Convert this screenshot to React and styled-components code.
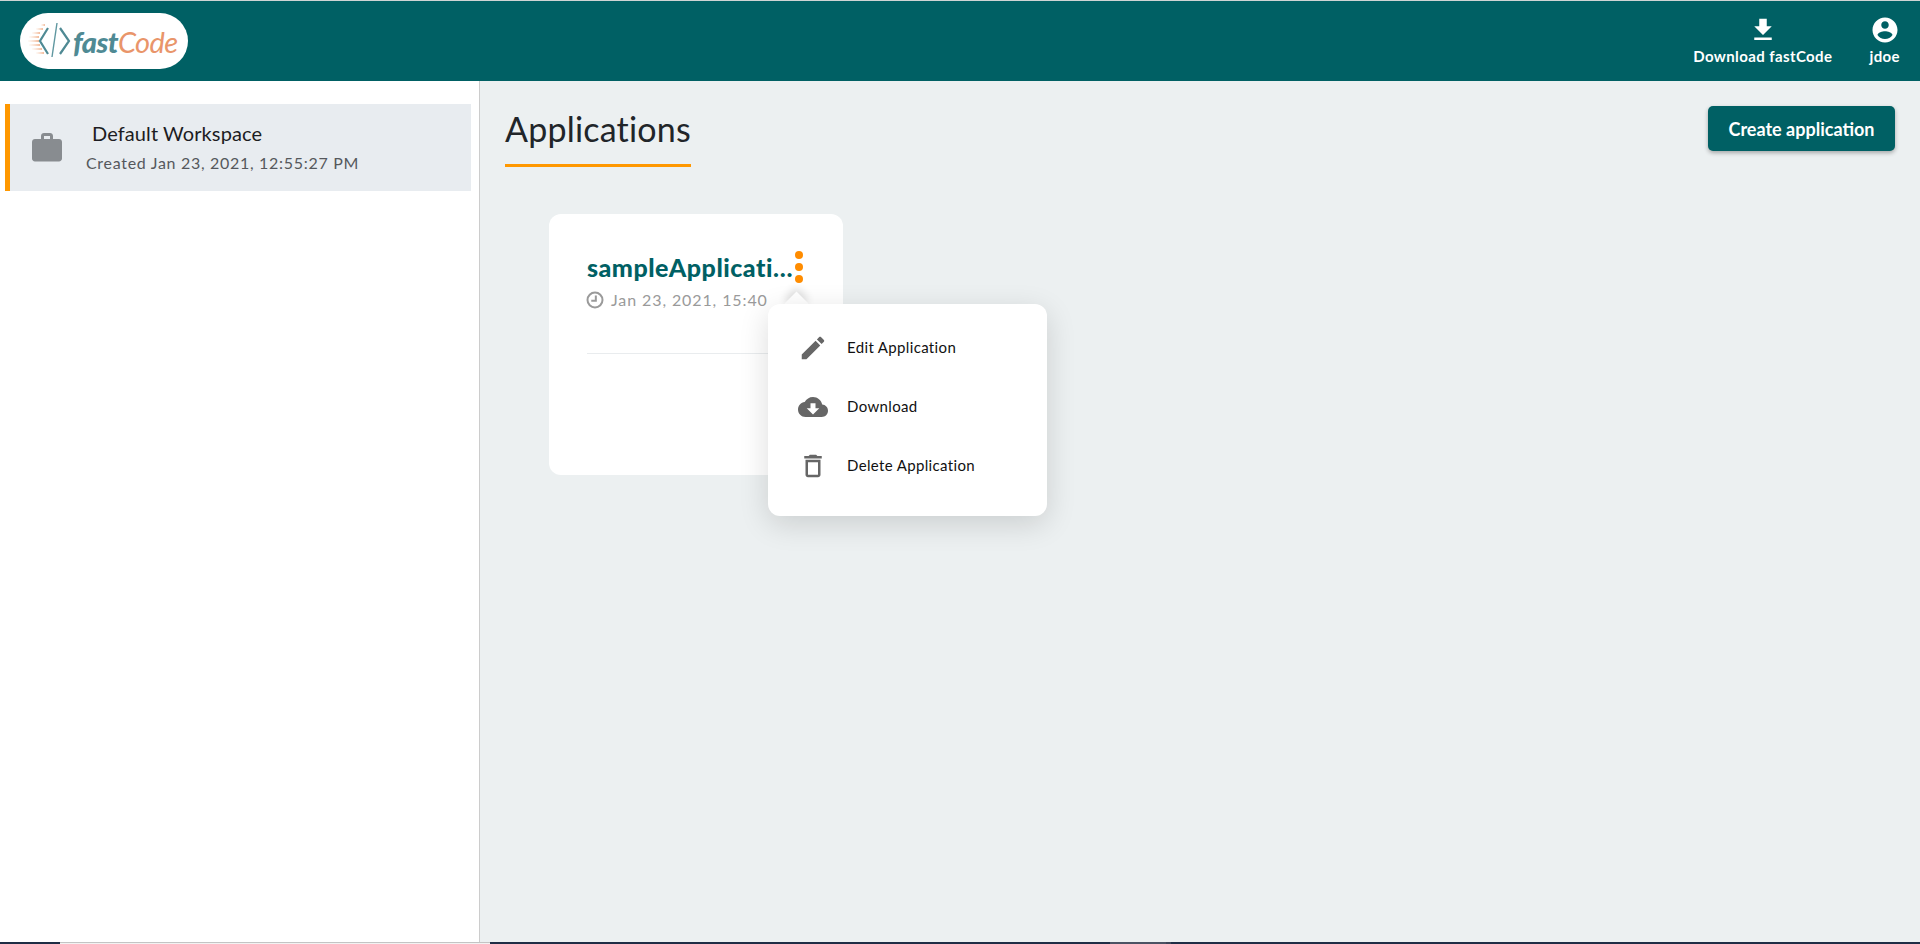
import React from "react";
import styled, { createGlobalStyle } from "styled-components";

const Global = createGlobalStyle`
  html, body, #root { margin: 0; padding: 0; height: 100%; }
  body { font-family: "Lato", "Liberation Sans", sans-serif; overflow: hidden; background: #fff; }
  * { box-sizing: border-box; }
`;

const Page = styled.div`
  height: 944px;
  display: flex;
  flex-direction: column;
`;

const Header = styled.header`
  flex: 0 0 81px;
  background: #006064;
  border-top: 1px solid #cfd4d4;
  display: flex;
  align-items: flex-start;
  justify-content: space-between;
  padding: 12px 20px 0 20px;
`;

const LogoPill = styled.div`
  width: 168px;
  height: 56px;
  border-radius: 28px;
  background: #fff;
  display: flex;
  align-items: center;
  padding-left: 7px;
  overflow: hidden;
`;

const LogoFast = styled.span`
  font-size: 29px;
  font-weight: 900;
  font-style: italic;
  color: #4f8a94;
  margin-left: 1px;
  letter-spacing: -0.5px;
`;

const LogoCode = styled.span`
  font-size: 29px;
  font-weight: 400;
  font-style: italic;
  color: #e9956a;
  letter-spacing: -0.6px;
`;

const HeaderActions = styled.nav`
  display: flex;
  align-items: flex-start;
  gap: 37px;
  padding-top: 2px;
`;

const HeaderAction = styled.div`
  display: flex;
  flex-direction: column;
  align-items: center;
  color: #fff;
  font-size: 15px;
  font-weight: 700;
  line-height: 20px;
  letter-spacing: 0.4px;
  white-space: nowrap;

  span {
    margin-top: 1px;
  }
`;

const Body = styled.div`
  flex: 1;
  display: flex;
  min-height: 0;
`;

const Sidebar = styled.aside`
  flex: 0 0 480px;
  background: #fff;
  border-right: 1px solid #cccccc;
  padding: 23px 8px 0 5px;
`;

const WorkspaceItem = styled.div`
  height: 87px;
  background: #e8ecf0;
  border-left: 5px solid #ff9800;
  display: flex;
  align-items: center;
  padding-left: 19px;
  gap: 20px;
`;

const WorkspaceText = styled.div`
  display: flex;
  flex-direction: column;
  margin-left: 1px;
`;

const WorkspaceName = styled.div`
  font-size: 20px;
  line-height: 26px;
  color: #1c1c22;
  padding-left: 6px;
  margin-bottom: 6px;
  margin-top: -2px;
  letter-spacing: 0.1px;
`;

const WorkspaceDate = styled.div`
  font-size: 16px;
  line-height: 22px;
  color: #55585c;
  letter-spacing: 0.7px;
`;

const Main = styled.main`
  flex: 1;
  background: #ecf0f1;
  padding: 25px 25px 0 25px;
`;

const TitleRow = styled.div`
  display: flex;
  justify-content: space-between;
  align-items: flex-start;
`;

const Title = styled.h1`
  margin: 0;
  font-size: 34px;
  font-weight: 400;
  line-height: 46px;
  height: 61px;
  color: #212529;
  letter-spacing: 0.2px;
  border-bottom: 3px solid #ff9800;
`;

const CreateButton = styled.button`
  width: 187px;
  height: 45px;
  border: none;
  border-radius: 5px;
  background: #006064;
  color: #fff;
  font: 700 18px "Lato", "Liberation Sans", sans-serif;
  box-shadow: 0 2px 4px rgba(0, 0, 0, 0.3);
`;

const Card = styled.section`
  position: relative;
  width: 294px;
  height: 261px;
  margin: 47px 0 0 44px;
  background: #fff;
  border-radius: 12px;
  padding: 35px 38px 0 38px;
`;

const CardHead = styled.div`
  display: flex;
  align-items: center;
`;

const CardTitle = styled.div`
  width: 208px;
  font-size: 25px;
  font-weight: 900;
  line-height: 36px;
  letter-spacing: 0.5px;
  color: #006064;
  white-space: nowrap;
  overflow: hidden;
  text-overflow: ellipsis;
`;

const Dots = styled.div`
  display: flex;
  flex-direction: column;
  gap: 4px;
`;

const Dot = styled.span`
  width: 8px;
  height: 8px;
  border-radius: 50%;
  background: #ff8c00;
`;

const CardDate = styled.div`
  display: flex;
  align-items: center;
  gap: 6px;
  margin-top: 3px;
  margin-left: -2px;
  font-size: 16px;
  line-height: 24px;
  color: #9a9a9a;
  letter-spacing: 0.9px;
`;

const Divider = styled.hr`
  border: none;
  border-top: 1px solid #e9ecee;
  margin: 41px -38px 0 0;
`;

const MenuWrap = styled.div`
  position: absolute;
  left: 219px;
  top: 90px;
  width: 279px;
  height: 212px;
`;

const MenuCaret = styled.span`
  position: absolute;
  left: 20px;
  top: -9px;
  width: 17px;
  height: 17px;
  background: #fff;
  transform: rotate(45deg);
  box-shadow: -3px -3px 9px rgba(0, 0, 0, 0.14);
`;

const MenuPanel = styled.div`
  position: relative;
  height: 100%;
  background: #fff;
  border-radius: 12px;
  box-shadow: 0 8px 30px rgba(0, 0, 0, 0.14);
  padding: 14px 0 0 30px;
`;

const MenuRow = styled.div`
  height: 59px;
  display: flex;
  align-items: center;
  gap: 19px;
`;

const MenuIcon = styled.span`
  width: 30px;
  display: flex;
  justify-content: center;
`;

const MenuLabel = styled.span`
  font-size: 15px;
  color: #111;
  letter-spacing: 0.35px;
  padding-bottom: 2px;
`;

const Taskbar = styled.footer`
  flex: 0 0 2px;
  display: flex;
  background: #1f2d45;
`;

const TaskSegment = styled.span`
  flex: 0 0 ${(p) => p.$w}px;
  background: ${(p) => p.$c};
  border-top: ${(p) => (p.$line ? "1px solid #c4c4c4" : "none")};
`;

const Glyph = ({ size = 24, color = "#fff", d }) => (
  <svg width={size} height={size} viewBox="0 0 24 24" fill={color} aria-hidden="true">
    <path d={d} />
  </svg>
);

const ICONS = {
  work: "M20 6h-4V4c0-1.11-.89-2-2-2h-4c-1.11 0-2 .89-2 2v2H4c-1.11 0-1.99.89-1.99 2L2 19c0 1.11.89 2 2 2h16c1.11 0 2-.89 2-2V8c0-1.11-.89-2-2-2zm-6 0h-4V4h4v2z",
  download: "M19 9h-4V3H9v6H5l7 7 7-7zM5 18v2h14v-2H5z",
  account: "M12 2C6.48 2 2 6.48 2 12s4.48 10 10 10 10-4.48 10-10S17.52 2 12 2zm0 3c1.66 0 3 1.34 3 3s-1.34 3-3 3-3-1.34-3-3 1.34-3 3-3zm0 14.2c-2.5 0-4.71-1.28-6-3.22.03-1.99 4-3.08 6-3.08 1.99 0 5.97 1.09 6 3.08-1.29 1.94-3.5 3.22-6 3.22z",
  edit: "M3 17.25V21h3.75L17.81 9.94l-3.75-3.75L3 17.25zM20.71 7.04c.39-.39.39-1.02 0-1.41l-2.34-2.34c-.39-.39-1.02-.39-1.41 0l-1.83 1.83 3.75 3.75 1.83-1.83z",
  cloud: "M19.35 10.04C18.67 6.59 15.64 4 12 4 9.11 4 6.6 5.64 5.35 8.04 2.34 8.36 0 10.91 0 14c0 3.31 2.69 6 6 6h13c2.76 0 5-2.24 5-5 0-2.64-2.05-4.78-4.65-4.96zM17 13l-5 5-5-5h3V9h4v4h3z",
  trash: "M6 19c0 1.1.9 2 2 2h8c1.1 0 2-.9 2-2V7H6v12zM8 9h8v10H8V9zm7.5-5l-1-1h-5l-1 1H5v2h14V4h-3.5z",
};

const ClockIcon = () => (
  <svg width="20" height="20" viewBox="0 0 24 24" fill="none" stroke="#9a9a9a" strokeWidth="2.4" aria-hidden="true">
    <circle cx="12" cy="12" r="9" />
    <path d="M13 6.5V13H7.5" />
  </svg>
);

const SPEED_LINES = [
  [11, 14, 4],
  [15, 9, 7],
  [19, 5, 8],
  [23, 2, 10],
  [27, 1, 11],
  [31, 2, 11],
  [35, 5, 10],
  [39, 9, 8],
];

const LogoMark = () => (
  <svg width="45" height="56" viewBox="0 0 45 56" fill="none" aria-hidden="true">
    <defs>
      <linearGradient id="speed" x1="0" x2="1" y1="0" y2="0">
        <stop offset="0" stopColor="#f7d2ba" stopOpacity="0.1" />
        <stop offset="1" stopColor="#f0ae88" stopOpacity="0.85" />
      </linearGradient>
    </defs>
    {SPEED_LINES.map(([y, x, w]) => (
      <rect key={y} x={x} y={y} width={w} height="2" fill="url(#speed)" />
    ))}
    <path d="M21 15 13 28l8 13" stroke="#4f8a94" strokeWidth="2.2" />
    <path d="M30 10 25 44" stroke="#5f97a0" strokeWidth="1.4" />
    <path d="M33 15l9 13-9 13" stroke="#4f8a94" strokeWidth="2.2" />
  </svg>
);

const ROWS = [
  { icon: "edit", size: 32, label: "Edit Application" },
  { icon: "cloud", size: 30, label: "Download" },
  { icon: "trash", size: 30, label: "Delete Application" },
];

const SEGMENTS = [
  { w: 60, c: "#1f2d45" },
  { w: 430, c: "#f2f2f2", line: true },
  { w: 620, c: "#1f2d45" },
  { w: 56, c: "#4b5263" },
  { w: 5, c: "#3d4558" },
];

export default function App() {
  return (
    <Page>
      <Global />
      <Header>
        <LogoPill>
          <LogoMark />
          <LogoFast>fast</LogoFast>
          <LogoCode>Code</LogoCode>
        </LogoPill>
        <HeaderActions>
          <HeaderAction>
            <Glyph size={30} d={ICONS.download} />
            <span>Download fastCode</span>
          </HeaderAction>
          <HeaderAction>
            <Glyph size={30} d={ICONS.account} />
            <span>jdoe</span>
          </HeaderAction>
        </HeaderActions>
      </Header>
      <Body>
        <Sidebar>
          <WorkspaceItem>
            <Glyph size={36} color="#888c90" d={ICONS.work} />
            <WorkspaceText>
              <WorkspaceName>Default Workspace</WorkspaceName>
              <WorkspaceDate>Created Jan 23, 2021, 12:55:27 PM</WorkspaceDate>
            </WorkspaceText>
          </WorkspaceItem>
        </Sidebar>
        <Main>
          <TitleRow>
            <Title>Applications</Title>
            <CreateButton>Create application</CreateButton>
          </TitleRow>
          <Card>
            <CardHead>
              <CardTitle>sampleApplication</CardTitle>
              <Dots>
                <Dot />
                <Dot />
                <Dot />
              </Dots>
            </CardHead>
            <CardDate>
              <ClockIcon />
              Jan 23, 2021, 15:40
            </CardDate>
            <Divider />
            <MenuWrap>
              <MenuCaret />
              <MenuPanel>
                {ROWS.map((r) => (
                  <MenuRow key={r.label}>
                    <MenuIcon>
                      <Glyph size={r.size} color="#666666" d={ICONS[r.icon]} />
                    </MenuIcon>
                    <MenuLabel>{r.label}</MenuLabel>
                  </MenuRow>
                ))}
              </MenuPanel>
            </MenuWrap>
          </Card>
        </Main>
      </Body>
      <Taskbar>
        {SEGMENTS.map((s, i) => (
          <TaskSegment key={i} $w={s.w} $c={s.c} $line={s.line} />
        ))}
      </Taskbar>
    </Page>
  );
}
